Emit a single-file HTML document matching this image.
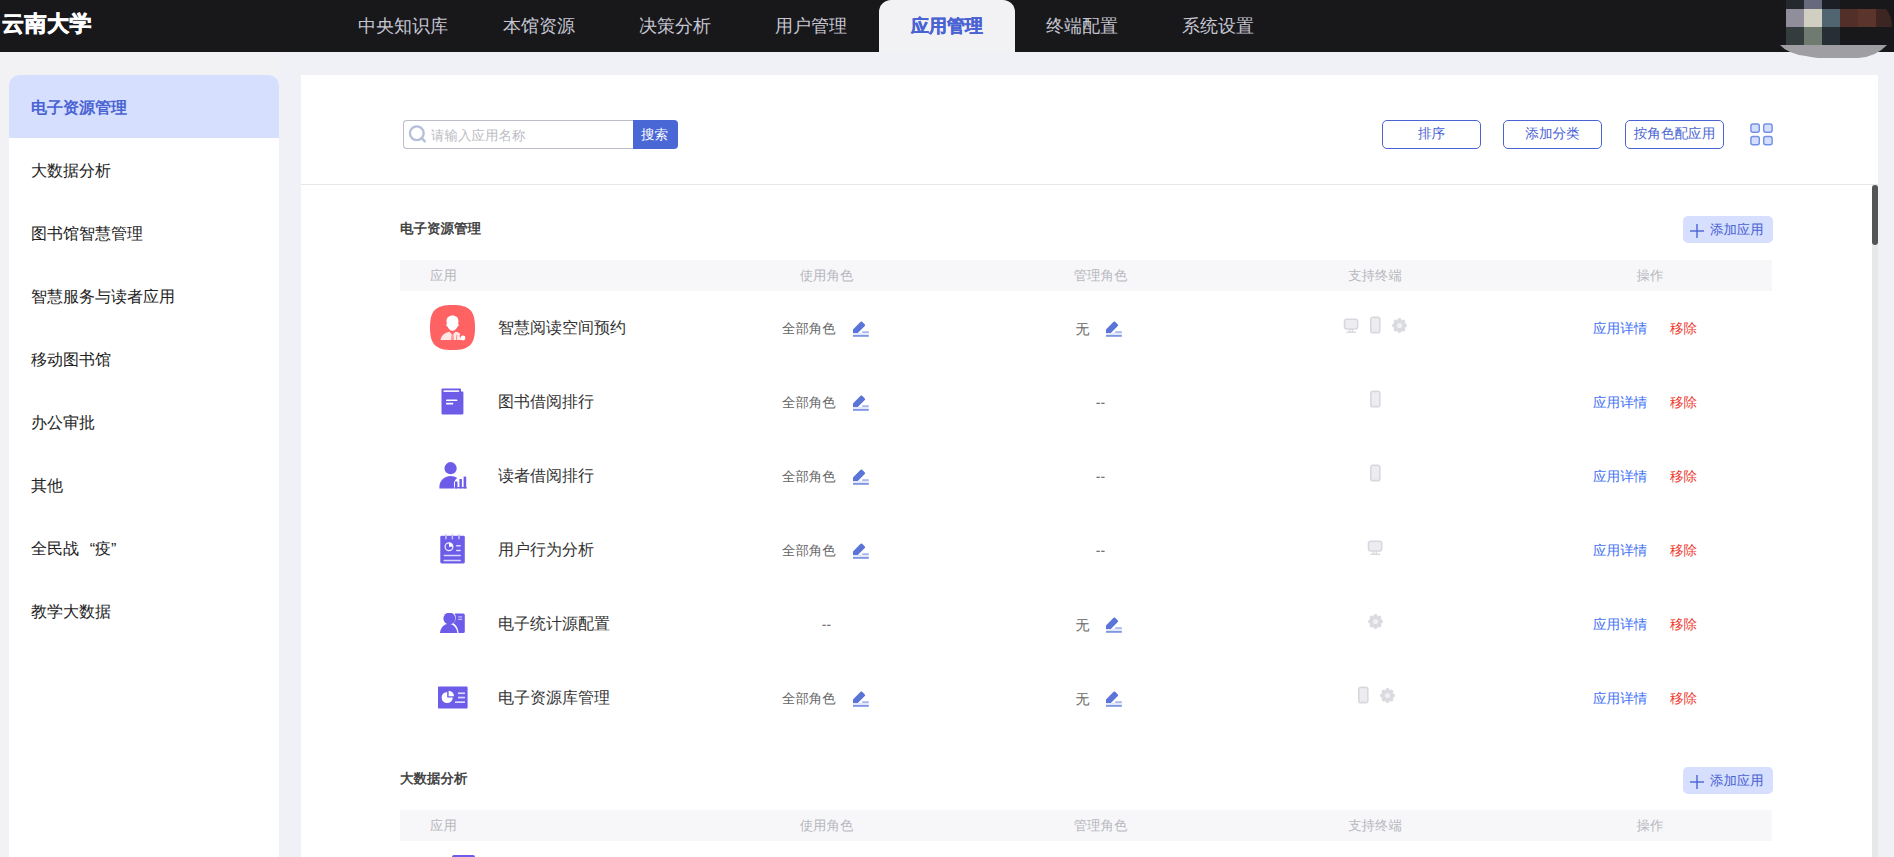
<!DOCTYPE html>
<html><head><meta charset="utf-8">
<style>
*{box-sizing:border-box;margin:0;padding:0}
html,body{width:1894px;height:857px;overflow:hidden}
body{background:#f0f1f6;font-family:"Liberation Sans",sans-serif;text-rendering:geometricPrecision;position:relative;color:#333}
.abs{position:absolute}
.t{position:absolute;white-space:nowrap;line-height:1}
#hdr{left:0;top:0;width:1894px;height:52px;background:#18181b}
.logo{left:2px;top:13px;font-size:22px;font-weight:bold;color:#fff;-webkit-text-stroke:0.7px #fff;letter-spacing:0.5px}
.nav{top:17px;font-size:18px;color:#c6c6d2;width:136px;text-align:center}
.tab{left:879px;top:0;width:136px;height:52px;background:#f2f2f5;border-radius:12px 12px 0 0}
#side{left:9px;top:75px;width:270px;height:800px;background:#fff;border-radius:10px 10px 0 0}
.sact{left:9px;top:75px;width:270px;height:63px;background:#d6dffd;border-radius:10px 10px 0 0}
.si{left:31px;font-size:16px;color:#222}
#main{left:301px;top:75px;width:1577px;height:800px;background:#fff}
.sep{left:301px;top:184px;width:1577px;height:1px;background:#e8e8ec}
.sb-track{left:1872px;top:185px;width:6px;height:680px;background:#e8e8e8}
.sb-thumb{left:1872px;top:185px;width:6px;height:60px;background:#555;border-radius:3px}
.btn{top:120px;width:99px;height:29px;border:1px solid #4a63d3;border-radius:5px;color:#4a63d3;font-size:13.6px;display:flex;align-items:center;justify-content:center}
.thead{left:400px;width:1372px;height:31px;background:#f7f7f9}
.th{font-size:13.4px;color:#b7b8c0}
.stitle{left:400px;font-size:13.5px;font-weight:bold;color:#444}
.addbtn{left:1683px;width:90px;height:27px;background:#d6dffd;border-radius:5px}
.name{left:498px;font-size:16px;color:#333}
.role{font-size:13.4px;color:#666}
.op1{left:1593px;font-size:13.6px;color:#4170f5}
.op2{left:1670px;font-size:13.6px;color:#f03a2f}
.addtxt{left:1710px;font-size:13.4px;color:#4a63d3}
</style></head><body>
<div id="hdr" class="abs"></div>
<div class="t logo">云南大学</div>
<div class="abs tab"></div>
<div class="t nav" style="left:335px">中央知识库</div>
<div class="t nav" style="left:471px">本馆资源</div>
<div class="t nav" style="left:607px">决策分析</div>
<div class="t nav" style="left:743px">用户管理</div>
<div class="t nav" style="left:879px;color:#4a63d3;font-weight:bold;-webkit-text-stroke:0.3px #4a63d3">应用管理</div>
<div class="t nav" style="left:1014px">终端配置</div>
<div class="t nav" style="left:1150px">系统设置</div>

<div class="abs" style="left:0;top:52px;width:279px;height:805px;background:#f2f2f5"></div>
<div id="side" class="abs"></div>
<div class="abs sact"></div>
<div class="t si" style="top:101px;color:#4a63d3;font-weight:bold">电子资源管理</div>
<div class="t si" style="top:164px">大数据分析</div>
<div class="t si" style="top:227px">图书馆智慧管理</div>
<div class="t si" style="top:290px">智慧服务与读者应用</div>
<div class="t si" style="top:353px">移动图书馆</div>
<div class="t si" style="top:416px">办公审批</div>
<div class="t si" style="top:479px">其他</div>
<div class="t si" style="top:542px">全民战<span style="display:inline-block;width:16px;text-align:right">“</span>疫<span style="display:inline-block;width:16px">”</span></div>
<div class="t si" style="top:605px">教学大数据</div>

<div id="main" class="abs"></div>
<div class="abs sep"></div>
<div class="abs sb-track"></div>
<div class="abs sb-thumb"></div>

<!-- search -->
<div class="abs" style="left:403px;top:120px;width:231px;height:29px;border:1px solid #bcbdc8;border-right:none;border-radius:4px 0 0 4px"></div>
<div class="t" style="left:431px;top:129px;font-size:13.5px;color:#bdbdc5">请输入应用名称</div>
<div class="abs" style="left:633px;top:120px;width:45px;height:29px;background:#4a67d6;border-radius:0 4px 4px 0"></div>
<div class="t" style="left:641px;top:128px;font-size:13.5px;color:#fff">搜索</div>

<div class="abs btn" style="left:1382px">排序</div>
<div class="abs btn" style="left:1503px">添加分类</div>
<div class="abs btn" style="left:1625px">按角色配应用</div>


<!-- search icon -->
<svg class="abs" style="left:408px;top:124px" width="20" height="20" viewBox="0 0 20 20"><circle cx="8.8" cy="9.2" r="6.9" fill="none" stroke="#b6bed9" stroke-width="2.3"/><path d="M13.8 14.2L16.8 17.4" stroke="#b6bed9" stroke-width="2.4" stroke-linecap="round"/></svg>
<!-- grid icon -->
<svg class="abs" style="left:1750px;top:123px" width="24" height="24" viewBox="0 0 24 24">
<rect x="0.9" y="0.9" width="8.4" height="8.4" rx="2" fill="#d5defa" stroke="#7390e5" stroke-width="1.45"/>
<rect x="13.7" y="0.9" width="8.4" height="8.4" rx="2" fill="#d5defa" stroke="#7390e5" stroke-width="1.45"/>
<rect x="0.9" y="13.4" width="8.4" height="8.4" rx="2" fill="#d5defa" stroke="#7390e5" stroke-width="1.45"/>
<rect x="13.7" y="13.4" width="8.4" height="8.4" rx="2" fill="#d5defa" stroke="#7390e5" stroke-width="1.45"/>
</svg>
<!-- avatar -->
<svg class="abs" style="left:1770px;top:0" width="124" height="62" viewBox="1770 0 124 62">
<rect x="1786" y="0" width="18" height="9" fill="#262830"/>
<rect x="1804" y="0" width="18" height="9" fill="#666a7c"/>
<rect x="1822" y="0" width="18" height="9" fill="#1c1f26"/>
<rect x="1786" y="9" width="18" height="18" fill="#8f8e9a"/>
<rect x="1804" y="9" width="18" height="18" fill="#d0cfc2"/>
<rect x="1822" y="9" width="18" height="18" fill="#516570"/>
<rect x="1840" y="9" width="18" height="18" fill="#522f29"/>
<rect x="1858" y="9" width="18" height="18" fill="#5b352c"/>
<path d="M1876 9H1886Q1892 16 1892 27H1876Z" fill="#3d2521"/>
<rect x="1786" y="27" width="18" height="18" fill="#353c3e"/>
<rect x="1804" y="27" width="18" height="18" fill="#6f7b71"/>
<rect x="1822" y="27" width="18" height="18" fill="#272e35"/>
<path d="M1780 45H1887Q1876 57 1858 58H1818Q1810 57 1806 56Q1788 54 1780 45Z" fill="#9f9fa3"/>
</svg>
<div class="t stitle" style="top:222px">电子资源管理</div>
<div class="abs addbtn" style="top:216px"></div>
<svg class="abs" style="left:1690px;top:224px" width="14" height="14" viewBox="0 0 14 14"><rect x="0" y="6.3" width="14" height="1.4" fill="#4a63d3"/><rect x="6.3" y="0" width="1.4" height="14" fill="#4a63d3"/></svg>
<div class="t addtxt" style="top:223px">添加应用</div>
<div class="abs thead" style="top:260px"></div>
<div class="t th" style="left:430px;top:269px">应用</div>
<div class="t th" style="left:726.5px;width:200px;text-align:center;top:269px">使用角色</div>
<div class="t th" style="left:1000.5px;width:200px;text-align:center;top:269px">管理角色</div>
<div class="t th" style="left:1275px;width:200px;text-align:center;top:269px">支持终端</div>
<div class="t th" style="left:1550px;width:200px;text-align:center;top:269px">操作</div>
<svg class="abs" style="left:430px;top:305px" width="45" height="45" viewBox="0 0 45 45"><path d="M22.5 0C39.5 0 45 5.5 45 22.5S39.5 45 22.5 45 0 39.5 0 22.5 5.5 0 22.5 0Z" fill="#fe6262"/><path d="M22.5 10.5c3.6 0 6 2.2 6 5.6 0 1 -.2 1.8 -.5 2.6.6.3.9.9.7 1.6-.2.8-.7 1.3-1.3 1.4-.9 2.2-2.7 4-4.9 4s-4-1.8-4.9-4c-.6-.1-1.1-.6-1.3-1.4-.2-.7.1-1.3.7-1.6-.3-.8-.5-1.6-.5-2.6 0-3.4 2.4-5.6 6-5.6Z" fill="#fff"/><path d="M10.5 35c.6-4.6 4.6-7.5 9-8.3l3 3.3 3-3.3c2 .4 3.6 1.1 4.9 2.2-.9.9-1 2.3-.3 3.3.8 1.1 2.3 1.5 3.6 1 .3.6.4 1.2.5 1.8Z" fill="#fff" opacity="0.85"/><path d="M21.6 28.4h1.8l.6 6.6h-3z" fill="#fe8d8d" opacity="0.9"/><rect x="26" y="30" width="1.2" height="5" fill="#fe9d9d"/><circle cx="33" cy="33" r="2.4" fill="#fff"/></svg>
<div class="t name" style="top:321px">智慧阅读空间预约</div>
<div class="t role" style="left:782px;top:322px">全部角色</div>
<svg class="abs" style="left:853px;top:321px" width="16" height="16" viewBox="0 0 16 16"><rect x="0" y="12" width="15.8" height="2" fill="#e2e7f9"/><path d="M0 8.4L7.6 0.8Q8.4 0 9.2 0.8L11.8 3.4Q12.6 4.2 11.8 5L4.8 12H0Z" fill="#5a74d8"/><rect x="9.2" y="10.2" width="6.6" height="1.8" fill="#a9b8ee"/><rect x="0" y="14" width="15.8" height="1.8" fill="#7f95e2"/></svg>
<div class="t role" style="left:1075.5px;top:321.5px;font-size:14px">无</div>
<svg class="abs" style="left:1106px;top:321px" width="16" height="16" viewBox="0 0 16 16"><rect x="0" y="12" width="15.8" height="2" fill="#e2e7f9"/><path d="M0 8.4L7.6 0.8Q8.4 0 9.2 0.8L11.8 3.4Q12.6 4.2 11.8 5L4.8 12H0Z" fill="#5a74d8"/><rect x="9.2" y="10.2" width="6.6" height="1.8" fill="#a9b8ee"/><rect x="0" y="14" width="15.8" height="1.8" fill="#7f95e2"/></svg>
<svg class="abs" style="left:1343px;top:318px" width="16" height="16" viewBox="0 0 16 16"><rect x="1.5" y="1.2" width="13.2" height="9.8" rx="2.2" fill="#ececf1" stroke="#d8d8df" stroke-width="1.6"/><rect x="6.1" y="11" width="1.3" height="2.8" fill="#d8d8df"/><rect x="8.7" y="11" width="1.3" height="2.8" fill="#d8d8df"/><rect x="3.4" y="13.6" width="9.8" height="1.3" rx="0.6" fill="#d8d8df"/></svg>
<svg class="abs" style="left:1369.9px;top:316px" width="11" height="18" viewBox="0 0 11 18"><rect x="0.8" y="1.2" width="9" height="15.6" rx="2.4" fill="#ececf1" stroke="#d8d8df" stroke-width="1.6"/><path d="M3.8 1.5H6.8L5.9 2.6H4.7Z" fill="#d8d8df"/><rect x="3.6" y="14.6" width="3.4" height="0.8" fill="#dedee4"/></svg>
<svg class="abs" style="left:1391.5px;top:317.5px" width="15" height="15" viewBox="-7.5 -7.5 15 15"><g fill="#dadae1"><circle r="5.5"/><rect x="-1.9" y="-7.4" width="3.8" height="14.8" rx="1.6" transform="rotate(0)"/><rect x="-1.9" y="-7.4" width="3.8" height="14.8" rx="1.6" transform="rotate(45)"/><rect x="-1.9" y="-7.4" width="3.8" height="14.8" rx="1.6" transform="rotate(90)"/><rect x="-1.9" y="-7.4" width="3.8" height="14.8" rx="1.6" transform="rotate(135)"/></g><circle r="2.6" fill="#f0f0f3"/></svg>
<div class="t op1" style="top:322px">应用详情</div>
<div class="t op2" style="top:322px">移除</div>
<svg class="abs" style="left:440.5px;top:388px" width="24" height="27" viewBox="0 0 24 27"><path d="M1 0.5H19.2Q20 0.5 20 1.3V3.6H21.6Q22.4 3.6 22.4 4.4V25.6Q22.4 26.4 21.6 26.4H1.3Q0.5 26.4 0.5 25.6V1.3Q0.5 0.5 1.3 0.5Z" fill="#6c5ce8"/><rect x="2.3" y="2.2" width="16" height="1.8" rx="0.9" fill="#fff" opacity="0.9"/><rect x="5" y="11.4" width="11.4" height="1.7" rx="0.85" fill="#fff"/><rect x="5" y="14.8" width="7.3" height="1.7" rx="0.85" fill="#fff"/></svg>
<div class="t name" style="top:395px">图书借阅排行</div>
<div class="t role" style="left:782px;top:396px">全部角色</div>
<svg class="abs" style="left:853px;top:395px" width="16" height="16" viewBox="0 0 16 16"><rect x="0" y="12" width="15.8" height="2" fill="#e2e7f9"/><path d="M0 8.4L7.6 0.8Q8.4 0 9.2 0.8L11.8 3.4Q12.6 4.2 11.8 5L4.8 12H0Z" fill="#5a74d8"/><rect x="9.2" y="10.2" width="6.6" height="1.8" fill="#a9b8ee"/><rect x="0" y="14" width="15.8" height="1.8" fill="#7f95e2"/></svg>
<div class="t role" style="left:1080.5px;width:40px;text-align:center;top:394.5px;font-size:14px">--</div>
<svg class="abs" style="left:1369.9px;top:390px" width="11" height="18" viewBox="0 0 11 18"><rect x="0.8" y="1.2" width="9" height="15.6" rx="2.4" fill="#ececf1" stroke="#d8d8df" stroke-width="1.6"/><path d="M3.8 1.5H6.8L5.9 2.6H4.7Z" fill="#d8d8df"/><rect x="3.6" y="14.6" width="3.4" height="0.8" fill="#dedee4"/></svg>
<div class="t op1" style="top:396px">应用详情</div>
<div class="t op2" style="top:396px">移除</div>
<svg class="abs" style="left:439px;top:461.5px" width="28" height="28" viewBox="0 0 28 28"><circle cx="11.6" cy="6.2" r="6.1" fill="#6c5ce8"/><path d="M0.4 26.4C0 19 5 14 11.6 14c2.6 0 4.8.7 6.6 2-2.4 1.6-3.6 4.4-3.2 7.2l.3 3.2Z" fill="#6c5ce8"/><rect x="16" y="19.5" width="2.5" height="6.9" fill="#6c5ce8"/><rect x="20.4" y="17" width="2.5" height="9.4" fill="#6c5ce8"/><rect x="24.6" y="14.6" width="2.6" height="11.8" fill="#6c5ce8"/><rect x="15.6" y="25" width="12" height="1.4" fill="#6c5ce8"/></svg>
<div class="t name" style="top:469px">读者借阅排行</div>
<div class="t role" style="left:782px;top:470px">全部角色</div>
<svg class="abs" style="left:853px;top:469px" width="16" height="16" viewBox="0 0 16 16"><rect x="0" y="12" width="15.8" height="2" fill="#e2e7f9"/><path d="M0 8.4L7.6 0.8Q8.4 0 9.2 0.8L11.8 3.4Q12.6 4.2 11.8 5L4.8 12H0Z" fill="#5a74d8"/><rect x="9.2" y="10.2" width="6.6" height="1.8" fill="#a9b8ee"/><rect x="0" y="14" width="15.8" height="1.8" fill="#7f95e2"/></svg>
<div class="t role" style="left:1080.5px;width:40px;text-align:center;top:468.5px;font-size:14px">--</div>
<svg class="abs" style="left:1369.9px;top:464px" width="11" height="18" viewBox="0 0 11 18"><rect x="0.8" y="1.2" width="9" height="15.6" rx="2.4" fill="#ececf1" stroke="#d8d8df" stroke-width="1.6"/><path d="M3.8 1.5H6.8L5.9 2.6H4.7Z" fill="#d8d8df"/><rect x="3.6" y="14.6" width="3.4" height="0.8" fill="#dedee4"/></svg>
<div class="t op1" style="top:470px">应用详情</div>
<div class="t op2" style="top:470px">移除</div>
<svg class="abs" style="left:440px;top:534px" width="26" height="30" viewBox="0 0 26 30"><rect x="0.3" y="1.8" width="24.5" height="27.6" rx="1.4" fill="#6c5ce8"/><rect x="5.2" y="0" width="1.5" height="5.4" rx="0.7" fill="#c9c3f7"/><rect x="11.6" y="0" width="1.5" height="5.4" rx="0.7" fill="#c9c3f7"/><rect x="18.2" y="0" width="1.5" height="5.4" rx="0.7" fill="#c9c3f7"/><circle cx="9" cy="12.7" r="3.9" fill="none" stroke="#fff" stroke-width="1.2" opacity="0.9"/><path d="M9 8.8A3.9 3.9 0 0 1 12.9 12.7H9Z" fill="#fff"/><rect x="16" y="11.1" width="4.8" height="1.5" rx="0.7" fill="#dcd8fb"/><rect x="16" y="15.8" width="4.8" height="1.5" rx="0.7" fill="#dcd8fb"/><rect x="3.5" y="20.7" width="17.4" height="1.5" rx="0.7" fill="#dcd8fb"/><rect x="3.5" y="25.8" width="17.4" height="1.5" rx="0.7" fill="#dcd8fb"/></svg>
<div class="t name" style="top:543px">用户行为分析</div>
<div class="t role" style="left:782px;top:544px">全部角色</div>
<svg class="abs" style="left:853px;top:543px" width="16" height="16" viewBox="0 0 16 16"><rect x="0" y="12" width="15.8" height="2" fill="#e2e7f9"/><path d="M0 8.4L7.6 0.8Q8.4 0 9.2 0.8L11.8 3.4Q12.6 4.2 11.8 5L4.8 12H0Z" fill="#5a74d8"/><rect x="9.2" y="10.2" width="6.6" height="1.8" fill="#a9b8ee"/><rect x="0" y="14" width="15.8" height="1.8" fill="#7f95e2"/></svg>
<div class="t role" style="left:1080.5px;width:40px;text-align:center;top:542.5px;font-size:14px">--</div>
<svg class="abs" style="left:1367px;top:540px" width="16" height="16" viewBox="0 0 16 16"><rect x="1.5" y="1.2" width="13.2" height="9.8" rx="2.2" fill="#ececf1" stroke="#d8d8df" stroke-width="1.6"/><rect x="6.1" y="11" width="1.3" height="2.8" fill="#d8d8df"/><rect x="8.7" y="11" width="1.3" height="2.8" fill="#d8d8df"/><rect x="3.4" y="13.6" width="9.8" height="1.3" rx="0.6" fill="#d8d8df"/></svg>
<div class="t op1" style="top:544px">应用详情</div>
<div class="t op2" style="top:544px">移除</div>
<svg class="abs" style="left:440px;top:613.1px" width="26" height="22" viewBox="0 0 26 22"><path d="M14.6 0.5H23.2Q24.8 0.5 24.8 2.1V18.4Q24.8 20 23.2 20H18.6C18.2 14.6 15.6 11.4 13.2 10.2 15.4 8.6 16.4 5.6 15.6 3Q15.2 1.6 14.6 0.5Z" fill="#6c5ce8"/><circle cx="9.4" cy="5.6" r="6" fill="#6c5ce8"/><path d="M0 20C0.4 14.6 4.2 10.8 8.6 10.8S16.8 14.6 17.4 20Z" fill="#6c5ce8"/><rect x="18.2" y="3.4" width="4" height="1.1" fill="#d0cbfa"/><rect x="18.2" y="5.8" width="4" height="1.1" fill="#d0cbfa"/></svg>
<div class="t name" style="top:617px">电子统计源配置</div>
<div class="t role" style="left:806.5px;width:40px;text-align:center;top:616.5px;font-size:14px">--</div>
<div class="t role" style="left:1075.5px;top:617.5px;font-size:14px">无</div>
<svg class="abs" style="left:1106px;top:617px" width="16" height="16" viewBox="0 0 16 16"><rect x="0" y="12" width="15.8" height="2" fill="#e2e7f9"/><path d="M0 8.4L7.6 0.8Q8.4 0 9.2 0.8L11.8 3.4Q12.6 4.2 11.8 5L4.8 12H0Z" fill="#5a74d8"/><rect x="9.2" y="10.2" width="6.6" height="1.8" fill="#a9b8ee"/><rect x="0" y="14" width="15.8" height="1.8" fill="#7f95e2"/></svg>
<svg class="abs" style="left:1367.5px;top:613.5px" width="15" height="15" viewBox="-7.5 -7.5 15 15"><g fill="#dadae1"><circle r="5.5"/><rect x="-1.9" y="-7.4" width="3.8" height="14.8" rx="1.6" transform="rotate(0)"/><rect x="-1.9" y="-7.4" width="3.8" height="14.8" rx="1.6" transform="rotate(45)"/><rect x="-1.9" y="-7.4" width="3.8" height="14.8" rx="1.6" transform="rotate(90)"/><rect x="-1.9" y="-7.4" width="3.8" height="14.8" rx="1.6" transform="rotate(135)"/></g><circle r="2.6" fill="#f0f0f3"/></svg>
<div class="t op1" style="top:618px">应用详情</div>
<div class="t op2" style="top:618px">移除</div>
<svg class="abs" style="left:438px;top:686.2px" width="30" height="23" viewBox="0 0 30 23"><rect x="0" y="0.6" width="29.6" height="22" rx="0.8" fill="#6c5ce8"/><path d="M9.2 5.9V11.6H14.8A5.6 5.6 0 1 1 9.2 5.9Z" fill="#fff"/><path d="M10.6 4.7A5.6 5.6 0 0 1 16 10.2H10.6Z" fill="#fff"/><rect x="20" y="6.4" width="7" height="1.7" fill="#ddd9fb"/><rect x="20" y="10.7" width="7" height="1.7" fill="#ddd9fb"/><rect x="17" y="15.3" width="10" height="1.7" fill="#ddd9fb"/></svg>
<div class="t name" style="top:691px">电子资源库管理</div>
<div class="t role" style="left:782px;top:692px">全部角色</div>
<svg class="abs" style="left:853px;top:691px" width="16" height="16" viewBox="0 0 16 16"><rect x="0" y="12" width="15.8" height="2" fill="#e2e7f9"/><path d="M0 8.4L7.6 0.8Q8.4 0 9.2 0.8L11.8 3.4Q12.6 4.2 11.8 5L4.8 12H0Z" fill="#5a74d8"/><rect x="9.2" y="10.2" width="6.6" height="1.8" fill="#a9b8ee"/><rect x="0" y="14" width="15.8" height="1.8" fill="#7f95e2"/></svg>
<div class="t role" style="left:1075.5px;top:691.5px;font-size:14px">无</div>
<svg class="abs" style="left:1106px;top:691px" width="16" height="16" viewBox="0 0 16 16"><rect x="0" y="12" width="15.8" height="2" fill="#e2e7f9"/><path d="M0 8.4L7.6 0.8Q8.4 0 9.2 0.8L11.8 3.4Q12.6 4.2 11.8 5L4.8 12H0Z" fill="#5a74d8"/><rect x="9.2" y="10.2" width="6.6" height="1.8" fill="#a9b8ee"/><rect x="0" y="14" width="15.8" height="1.8" fill="#7f95e2"/></svg>
<svg class="abs" style="left:1357.9px;top:686px" width="11" height="18" viewBox="0 0 11 18"><rect x="0.8" y="1.2" width="9" height="15.6" rx="2.4" fill="#ececf1" stroke="#d8d8df" stroke-width="1.6"/><path d="M3.8 1.5H6.8L5.9 2.6H4.7Z" fill="#d8d8df"/><rect x="3.6" y="14.6" width="3.4" height="0.8" fill="#dedee4"/></svg>
<svg class="abs" style="left:1379.5px;top:687.5px" width="15" height="15" viewBox="-7.5 -7.5 15 15"><g fill="#dadae1"><circle r="5.5"/><rect x="-1.9" y="-7.4" width="3.8" height="14.8" rx="1.6" transform="rotate(0)"/><rect x="-1.9" y="-7.4" width="3.8" height="14.8" rx="1.6" transform="rotate(45)"/><rect x="-1.9" y="-7.4" width="3.8" height="14.8" rx="1.6" transform="rotate(90)"/><rect x="-1.9" y="-7.4" width="3.8" height="14.8" rx="1.6" transform="rotate(135)"/></g><circle r="2.6" fill="#f0f0f3"/></svg>
<div class="t op1" style="top:692px">应用详情</div>
<div class="t op2" style="top:692px">移除</div>
<div class="t stitle" style="top:772px">大数据分析</div>
<div class="abs addbtn" style="top:767px"></div>
<svg class="abs" style="left:1690px;top:775px" width="14" height="14" viewBox="0 0 14 14"><rect x="0" y="6.3" width="14" height="1.4" fill="#4a63d3"/><rect x="6.3" y="0" width="1.4" height="14" fill="#4a63d3"/></svg>
<div class="t addtxt" style="top:774px">添加应用</div>
<div class="abs thead" style="top:810px"></div>
<div class="t th" style="left:430px;top:819px">应用</div>
<div class="t th" style="left:726.5px;width:200px;text-align:center;top:819px">使用角色</div>
<div class="t th" style="left:1000.5px;width:200px;text-align:center;top:819px">管理角色</div>
<div class="t th" style="left:1275px;width:200px;text-align:center;top:819px">支持终端</div>
<div class="t th" style="left:1550px;width:200px;text-align:center;top:819px">操作</div>
<div class="abs" style="left:452px;top:855px;width:23px;height:30px;background:#6c5ce8;border-radius:2px"></div>
</body></html>
